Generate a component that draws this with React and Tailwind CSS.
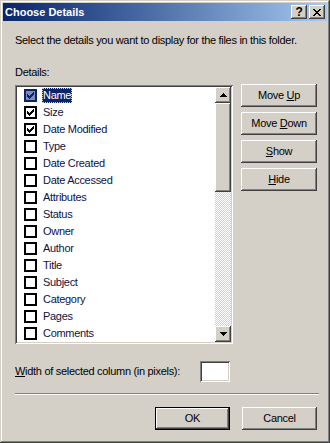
import React from 'react';

const items = [
  { label: 'Name', checked: true, selected: true },
  { label: 'Size', checked: true },
  { label: 'Date Modified', checked: true },
  { label: 'Type' },
  { label: 'Date Created' },
  { label: 'Date Accessed' },
  { label: 'Attributes' },
  { label: 'Status' },
  { label: 'Owner' },
  { label: 'Author' },
  { label: 'Title' },
  { label: 'Subject' },
  { label: 'Category' },
  { label: 'Pages' },
  { label: 'Comments' },
];

const raised =
  'shadow-[inset_-1px_-1px_#404040,inset_1px_1px_#ffffff,inset_-2px_-2px_#808080,inset_2px_2px_#d4d0c8]';
const sunken =
  'shadow-[inset_1px_1px_#808080,inset_-1px_-1px_#ffffff,inset_2px_2px_#404040,inset_-2px_-2px_#d4d0c8]';

function Check({ color = '#000' }) {
  return (
    <svg width="7" height="7" viewBox="0 0 7 7" shapeRendering="crispEdges">
      <path
        fill={color}
        d="M6 0h1v3h-1v1h-1v1h-1v1h-1v1h-1v-1h-1v-1h-1v-3h1v1h1v1h1v-1h1v-1h1z"
      />
    </svg>
  );
}

function Arrow({ down }) {
  return (
    <svg width="7" height="4" viewBox="0 0 7 4" shapeRendering="crispEdges">
      {down ? (
        <path fill="#000" d="M0 0h7v1h-1v1h-1v1h-1v1h-1v-1h-1v-1h-1v-1h-1z" />
      ) : (
        <path fill="#000" d="M3 0h1v1h1v1h1v1h1v1h-7v-1h1v-1h1v-1h1z" />
      )}
    </svg>
  );
}

function Button({ children, wide = 'w-[76px]', def = false }) {
  return (
    <div
      className={`${wide} h-[23px] flex items-center justify-center bg-[#d4d0c8] text-[11px] text-black ${
        def
          ? 'shadow-[inset_0_0_0_1px_#000,inset_-2px_-2px_#404040,inset_2px_2px_#ffffff,inset_-3px_-3px_#808080]'
          : raised
      }`}
    >
      <span className="whitespace-pre">{children}</span>
    </div>
  );
}

function Row({ item }) {
  return (
    <div className="h-[17px] flex items-center pl-[7px] shrink-0">
      <div
        className={`w-[13px] h-[13px] border-2 flex items-center justify-center ${
          item.selected ? 'border-[#0a246a] bg-[#7f8db5]' : 'border-black bg-white'
        }`}
      >
        {item.checked && <Check color={item.selected ? '#0a246a' : '#000'} />}
      </div>
      <span
        className={`ml-[5px] px-[1px] h-[15px] flex items-center ${
          item.selected
            ? 'bg-[#0a246a] text-white outline-1 outline-dotted outline-[#d4d0c8] -outline-offset-1'
            : 'text-[#111144]'
        }`}
      >
        {item.label}
      </span>
    </div>
  );
}

function TitleButton({ children }) {
  return (
    <div
      className={`w-[16px] h-[14px] bg-[#d4d0c8] flex items-center justify-center text-[12px] font-bold leading-none text-black ${raised}`}
    >
      {children}
    </div>
  );
}

export default function App() {
  return (
    <div
      className="w-[330px] h-[443px] bg-[#d4d0c8] p-[3px] flex flex-col shadow-[inset_-1px_-1px_#404040,inset_1px_1px_#d4d0c8,inset_-2px_-2px_#808080,inset_2px_2px_#ffffff] text-[11px] tracking-[-0.3px] text-black"
      style={{ fontFamily: 'Tahoma, "Liberation Sans", Arial, sans-serif' }}
    >
      {/* title bar */}
      <div className="h-[18px] shrink-0 flex items-center pl-[2px] pr-[2px] bg-gradient-to-r from-[#0a246a] to-[#a6caf0]">
        <span className="text-white font-bold text-[11px] tracking-normal flex-1">Choose Details</span>
        <div className="flex gap-[2px]">
          <TitleButton>?</TitleButton>
          <TitleButton>
            <svg width="8" height="7" viewBox="0 0 8 7" shapeRendering="crispEdges">
              <path
                fill="#000"
                d="M0 0h2v1h1v1h2v-1h1v-1h2v1h-1v1h-1v1h-1v1h1v1h1v1h1v1h-2v-1h-1v-1h-2v1h-1v1h-2v-1h1v-1h1v-1h1v-1h-1v-1h-1v-1h-1z"
              />
            </svg>
          </TitleButton>
        </div>
      </div>

      <div className="flex-1 flex flex-col pl-[12px] pr-[10px]">
        <p className="mt-[13px] leading-[13px] whitespace-nowrap">
          Select the details you want to display for the files in this folder.
        </p>
        <p className="mt-[19px] leading-[13px]">Details:</p>

        <div className="mt-[6px] flex gap-[8px]">
          {/* list box */}
          <div className={`w-[218px] h-[259px] shrink-0 bg-white p-[2px] flex ${sunken}`}>
            <div className="flex-1 overflow-hidden flex flex-col">
              {items.map((it) => (
                <Row key={it.label} item={it} />
              ))}
            </div>
            <div className="w-[16px] flex flex-col bg-[repeating-conic-gradient(#d4d0c8_0_25%,#ffffff_0_50%)] bg-[length:2px_2px]">
              <div className={`h-[16px] bg-[#d4d0c8] flex items-center justify-center ${raised}`}>
                <Arrow />
              </div>
              <div className={`h-[89px] bg-[#d4d0c8] ${raised}`} />
              <div className="flex-1" />
              <div className={`h-[16px] bg-[#d4d0c8] flex items-center justify-center ${raised}`}>
                <Arrow down />
              </div>
            </div>
          </div>

          {/* side buttons */}
          <div className="flex flex-col gap-[5px] -mt-[1px]">
            <Button>
              Move <span className="underline">U</span>p
            </Button>
            <Button>
              Move <span className="underline">D</span>own
            </Button>
            <Button>
              <span className="underline">S</span>how
            </Button>
            <Button>
              <span className="underline">H</span>ide
            </Button>
          </div>
        </div>

        <div className="mt-[17px] flex items-center gap-[20px]">
          <span className="whitespace-nowrap">
            <span className="underline">W</span>idth of selected column (in pixels):
          </span>
          <div className={`w-[30px] h-[21px] bg-white ${sunken}`} />
        </div>

        <div className="mt-[11px] h-[2px] border-t border-[#808080] border-b border-b-white -mr-[2px]" />

        <div className="mt-[12px] flex justify-end gap-[12px]">
          <Button wide="w-[75px]" def>
            OK
          </Button>
          <Button wide="w-[75px]">Cancel</Button>
        </div>
      </div>
    </div>
  );
}
